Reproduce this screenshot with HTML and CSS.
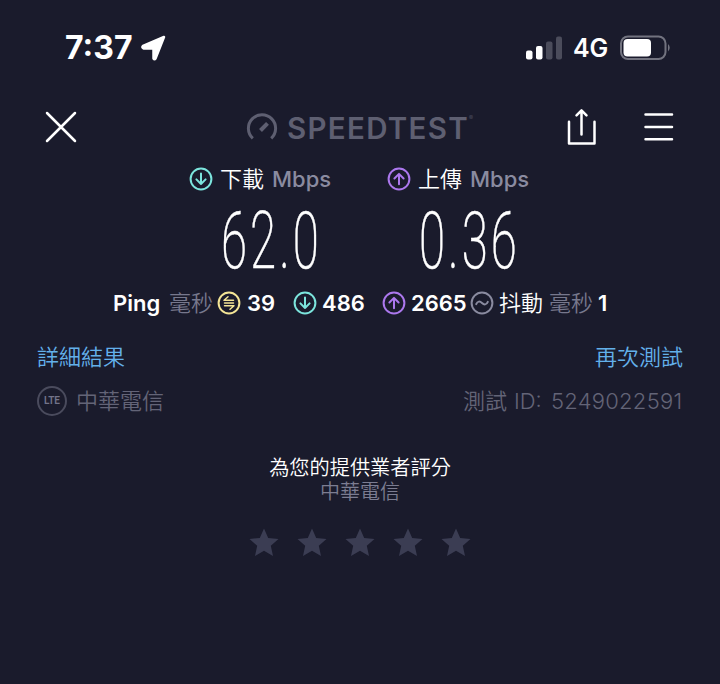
FILE: index.html
```html
<!DOCTYPE html>
<html lang="zh-Hant">
<head>
<meta charset="utf-8">
<title>Speedtest</title>
<link rel="stylesheet" href="styles.css">
</head>
<body>
<svg width="0" height="0" class="defs">
  <symbol id="down" viewBox="0 0 24 24"><circle cx="12" cy="12" r="10.4"/><path d="M12 6.500v10.400M7.400 12.400l4.600 4.600 4.600-4.600"/></symbol>
  <symbol id="up" viewBox="0 0 24 24"><circle cx="12" cy="12" r="10.4"/><path d="M12 17.300V7M7.400 11.500L12 6.900l4.600 4.600"/></symbol>
  <symbol id="idle" viewBox="0 0 24 24"><circle cx="12" cy="12" r="10.4"/><path class="fine" d="M11 5.800L7 9.300H16.500M7.500 12H16.500M7.500 14.700H17L13 18.200"/></symbol>
  <symbol id="jitter" viewBox="0 0 24 24"><circle cx="12" cy="12" r="10.4"/><path d="M6.200 13.200C7.600 10 9.800 9.900 12 12s4.400 2 5.800-1.200"/></symbol>
  <symbol id="star" viewBox="0 0 30 30"><path d="M15 .5l4.200 9.400 10.300 1-7.700 6.900 2.200 10.100L15 22.700 6 27.900l2.200-10.100L.5 10.900l10.300-1z"/></symbol>
</svg>
<header class="status">
  <span class="time">7:37</span>
  <svg class="location" width="28" height="28" viewBox="0 0 28 28"><path d="M3 12L24 3 15.500 24.500q-1 1.500-2 0V14.500H3.500q-2-1-.5-2.500z"/></svg>
  <svg class="signal" width="36" height="24" viewBox="0 0 36 24"><rect y="14.500" width="6.500" height="9" rx="2"/><rect x="10" y="10" width="6.500" height="13.500" rx="2"/><rect class="off" x="20" y="5.500" width="6.500" height="18" rx="2"/><rect class="off" x="30" y=".5" width="6" height="23" rx="2"/></svg>
  <span class="network">4G</span>
  <svg class="battery" width="52" height="26" viewBox="0 0 52 26"><rect class="shell" x="1" y="1.500" width="44.500" height="22.500" rx="7"/><rect x="3.500" y="4" width="27.500" height="17.500" rx="4"/><path class="tip" d="M48 9q3.500 3.500 0 7.500z"/></svg>
</header>
<nav class="nav">
  <svg class="close" width="32" height="32" viewBox="0 0 32 32"><path d="M2 2l28 28M30 2L2 30"/></svg>
  <div class="brand">
    <svg class="gauge" width="32" height="28" viewBox="0 0 32 28"><path d="M6.800 25.400A13.600 13.600 0 1 1 25.200 25.400"/><path class="needle" d="M14.500 17.500L21.500 10.300"/></svg>
    <span class="wordmark">SPEEDTEST</span><span class="reg">®</span>
  </div>
  <svg class="share" width="30" height="38" viewBox="0 0 30 38"><path d="M2 13.700V35.500H27.500V13.700M14.500 26.500V2.500M9.500 7.300l5-5 5 5"/></svg>
  <svg class="menu" width="30" height="30" viewBox="0 0 30 30"><path d="M1.500 2.500H28M1.500 15H28M1.500 27.300H28"/></svg>
</nav>
<main>
  <section class="speeds">
    <div class="speed">
      <div class="label"><svg class="icon teal"><use href="#down"/></svg><span class="name">下載</span><span class="unit">Mbps</span></div>
      <div class="value"><span class="digits">62.0</span></div>
    </div>
    <div class="speed">
      <div class="label"><svg class="icon purple"><use href="#up"/></svg><span class="name">上傳</span><span class="unit">Mbps</span></div>
      <div class="value"><span class="digits">0.36</span></div>
    </div>
  </section>
  <section class="latency">
    <b>Ping</b><span class="ms">毫秒</span>
    <svg class="icon yellow"><use href="#idle"/></svg><b>39</b>
    <svg class="icon teal"><use href="#down"/></svg><b>486</b>
    <svg class="icon purple"><use href="#up"/></svg><b>2665</b>
    <svg class="icon gray"><use href="#jitter"/></svg><span>抖動</span><span class="ms">毫秒</span><b>1</b>
  </section>
  <section class="links"><a>詳細結果</a><a>再次測試</a></section>
  <section class="details">
    <span class="lte">LTE</span><span class="carrier">中華電信</span>
    <span class="test">測試</span><span class="idlabel">ID:</span><span class="id">5249022591</span>
  </section>
  <section class="rating">
    <p>為您的提供業者評分</p>
    <p class="provider">中華電信</p>
    <div class="stars"><svg><use href="#star"/></svg><svg><use href="#star"/></svg><svg><use href="#star"/></svg><svg><use href="#star"/></svg><svg><use href="#star"/></svg></div>
  </section>
</main>
</body>
</html>
```
FILE: styles.css
```css
* { box-sizing: border-box; }
body {
  margin: 0;
  width: 720px;
  height: 684px;
  overflow: hidden;
  background: #1a1b2c;
  color: #fff;
  font: 350 22px/30px Inter, "Noto Sans CJK TC", sans-serif;
  white-space: nowrap;
}
svg { display: block; flex: none; fill: none; stroke-linecap: round; stroke-linejoin: round; }
.defs { position: absolute; }

.status { display: flex; align-items: center; height: 94px; padding: 2px 48px 0 65px; }
.time { width: 78px; font-size: 32px; font-weight: 700; }
.location, .signal, .battery { fill: #fff; }
.location { stroke: #fff; stroke-width: 2.500; }
.signal { margin-left: 358px; }
.off { fill: #4b4c5b; }
.network { width: 48px; margin-left: 11px; font-size: 25px; font-weight: 600; }
.battery { margin-left: 1px; }
.battery .shell { fill: none; stroke: #72737f; stroke-width: 2; }
.tip { fill: #72737f; }

.nav { display: flex; align-items: center; height: 66px; padding-left: 45px; }
.close, .share, .menu { stroke: #fff; stroke-width: 2.500; }
.brand { display: flex; align-items: center; width: 321px; margin-left: 169px; color: #5e5f71; }
.gauge { stroke: #5e5f71; stroke-width: 3; stroke-linecap: butt; }
.gauge .needle { stroke-width: 4; }
.wordmark { margin-left: 9px; padding-top: 2px; font-size: 29.500px; font-weight: 600; letter-spacing: 1.300px; }
.reg { font-size: 6px; margin-top: -18px; }
.menu { margin-left: 47px; }

.speeds { display: flex; gap: 58px; padding-left: 189px; }
.speed { width: 140px; }
.label { display: flex; align-items: center; height: 38px; }
.icon { width: 24px; height: 24px; stroke-width: 2; }
.fine { stroke-width: 1.500; }
.teal { stroke: #7ce5dd; }
.purple { stroke: #ac78ee; }
.yellow { stroke: #f4e596; }
.gray { stroke: #8a8ba0; }
.name { width: 52px; padding-left: 7px; }
.unit { margin-left: 8px; font-weight: 500; color: #8a8ba0; }
.value { height: 82px; padding: 2px 0 0 32px; }
.digits {
  display: inline-block;
  font: 200 79px/82px Roboto, sans-serif;
  letter-spacing: 5px;
  -webkit-text-stroke: .5px #fff;
  transform: scaleX(.6);
  transform-origin: 0 50%;
}

.latency {
  display: grid;
  grid-template-columns: 56px 48px 30px 46px 29px 60px 29px 59px 29px 50px 49px 20px;
  align-items: center;
  height: 46px;
  padding-left: 113px;
}
.latency b { font-weight: 600; }
.ms { color: #77788d; }

.links { display: flex; justify-content: space-between; align-items: center; height: 62px; padding: 0 37px; color: #63b0ea; }
.details { display: flex; align-items: center; height: 26px; padding: 0 36px 0 37px; color: #636477; }
.lte { width: 30px; height: 30px; border: 2px solid #4a4b5d; border-radius: 50%; font: 600 10px/26px Roboto, sans-serif; text-align: center; color: #72738a; }
.carrier { width: 396px; padding-left: 9px; }
.test { width: 51px; }
.idlabel { width: 37px; }
.id { letter-spacing: .25px; }

.rating { padding-top: 41px; text-align: center; font-size: 20.200px; line-height: 25px; }
.rating p { margin: 0; }
.provider { font-size: 20px; color: #7c7d92; }
.stars { display: flex; justify-content: center; gap: 18px; margin-top: 23px; }
.stars svg { width: 30px; height: 30px; fill: #3b3d53; }
```
